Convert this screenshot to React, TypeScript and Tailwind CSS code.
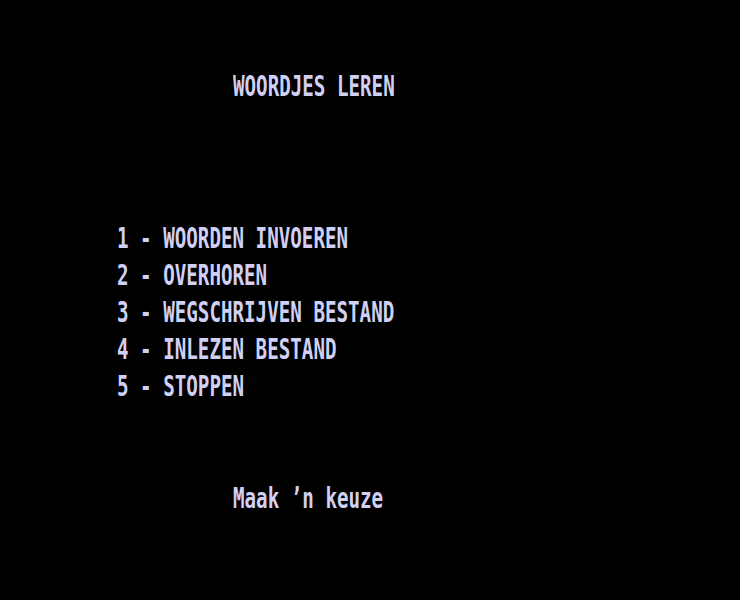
import React from "react";

const lineCls =
  "h-[37px] leading-[37px] whitespace-pre text-[19.2px] font-bold text-[#d0d0f4] [font-family:'DejaVu_Sans_Mono','Liberation_Mono',monospace] scale-y-[1.45] origin-center";

export default function App() {
  const items = [
    "1 - WOORDEN INVOEREN",
    "2 - OVERHOREN",
    "3 - WEGSCHRIJVEN BESTAND",
    "4 - INLEZEN BESTAND",
    "5 - STOPPEN",
  ];
  return (
    <div className="w-[740px] h-[600px] bg-black overflow-hidden pt-[68px] pl-[117px]">
      <div className={`${lineCls} ml-[116px]`}>WOORDJES LEREN</div>
      <div className="mt-[115px] flex flex-col">
        {items.map((t) => (
          <div key={t} className={lineCls}>
            {t}
          </div>
        ))}
      </div>
      <div className={`${lineCls} ml-[116px] mt-[75px]`}>Maak ’n keuze</div>
    </div>
  );
}
